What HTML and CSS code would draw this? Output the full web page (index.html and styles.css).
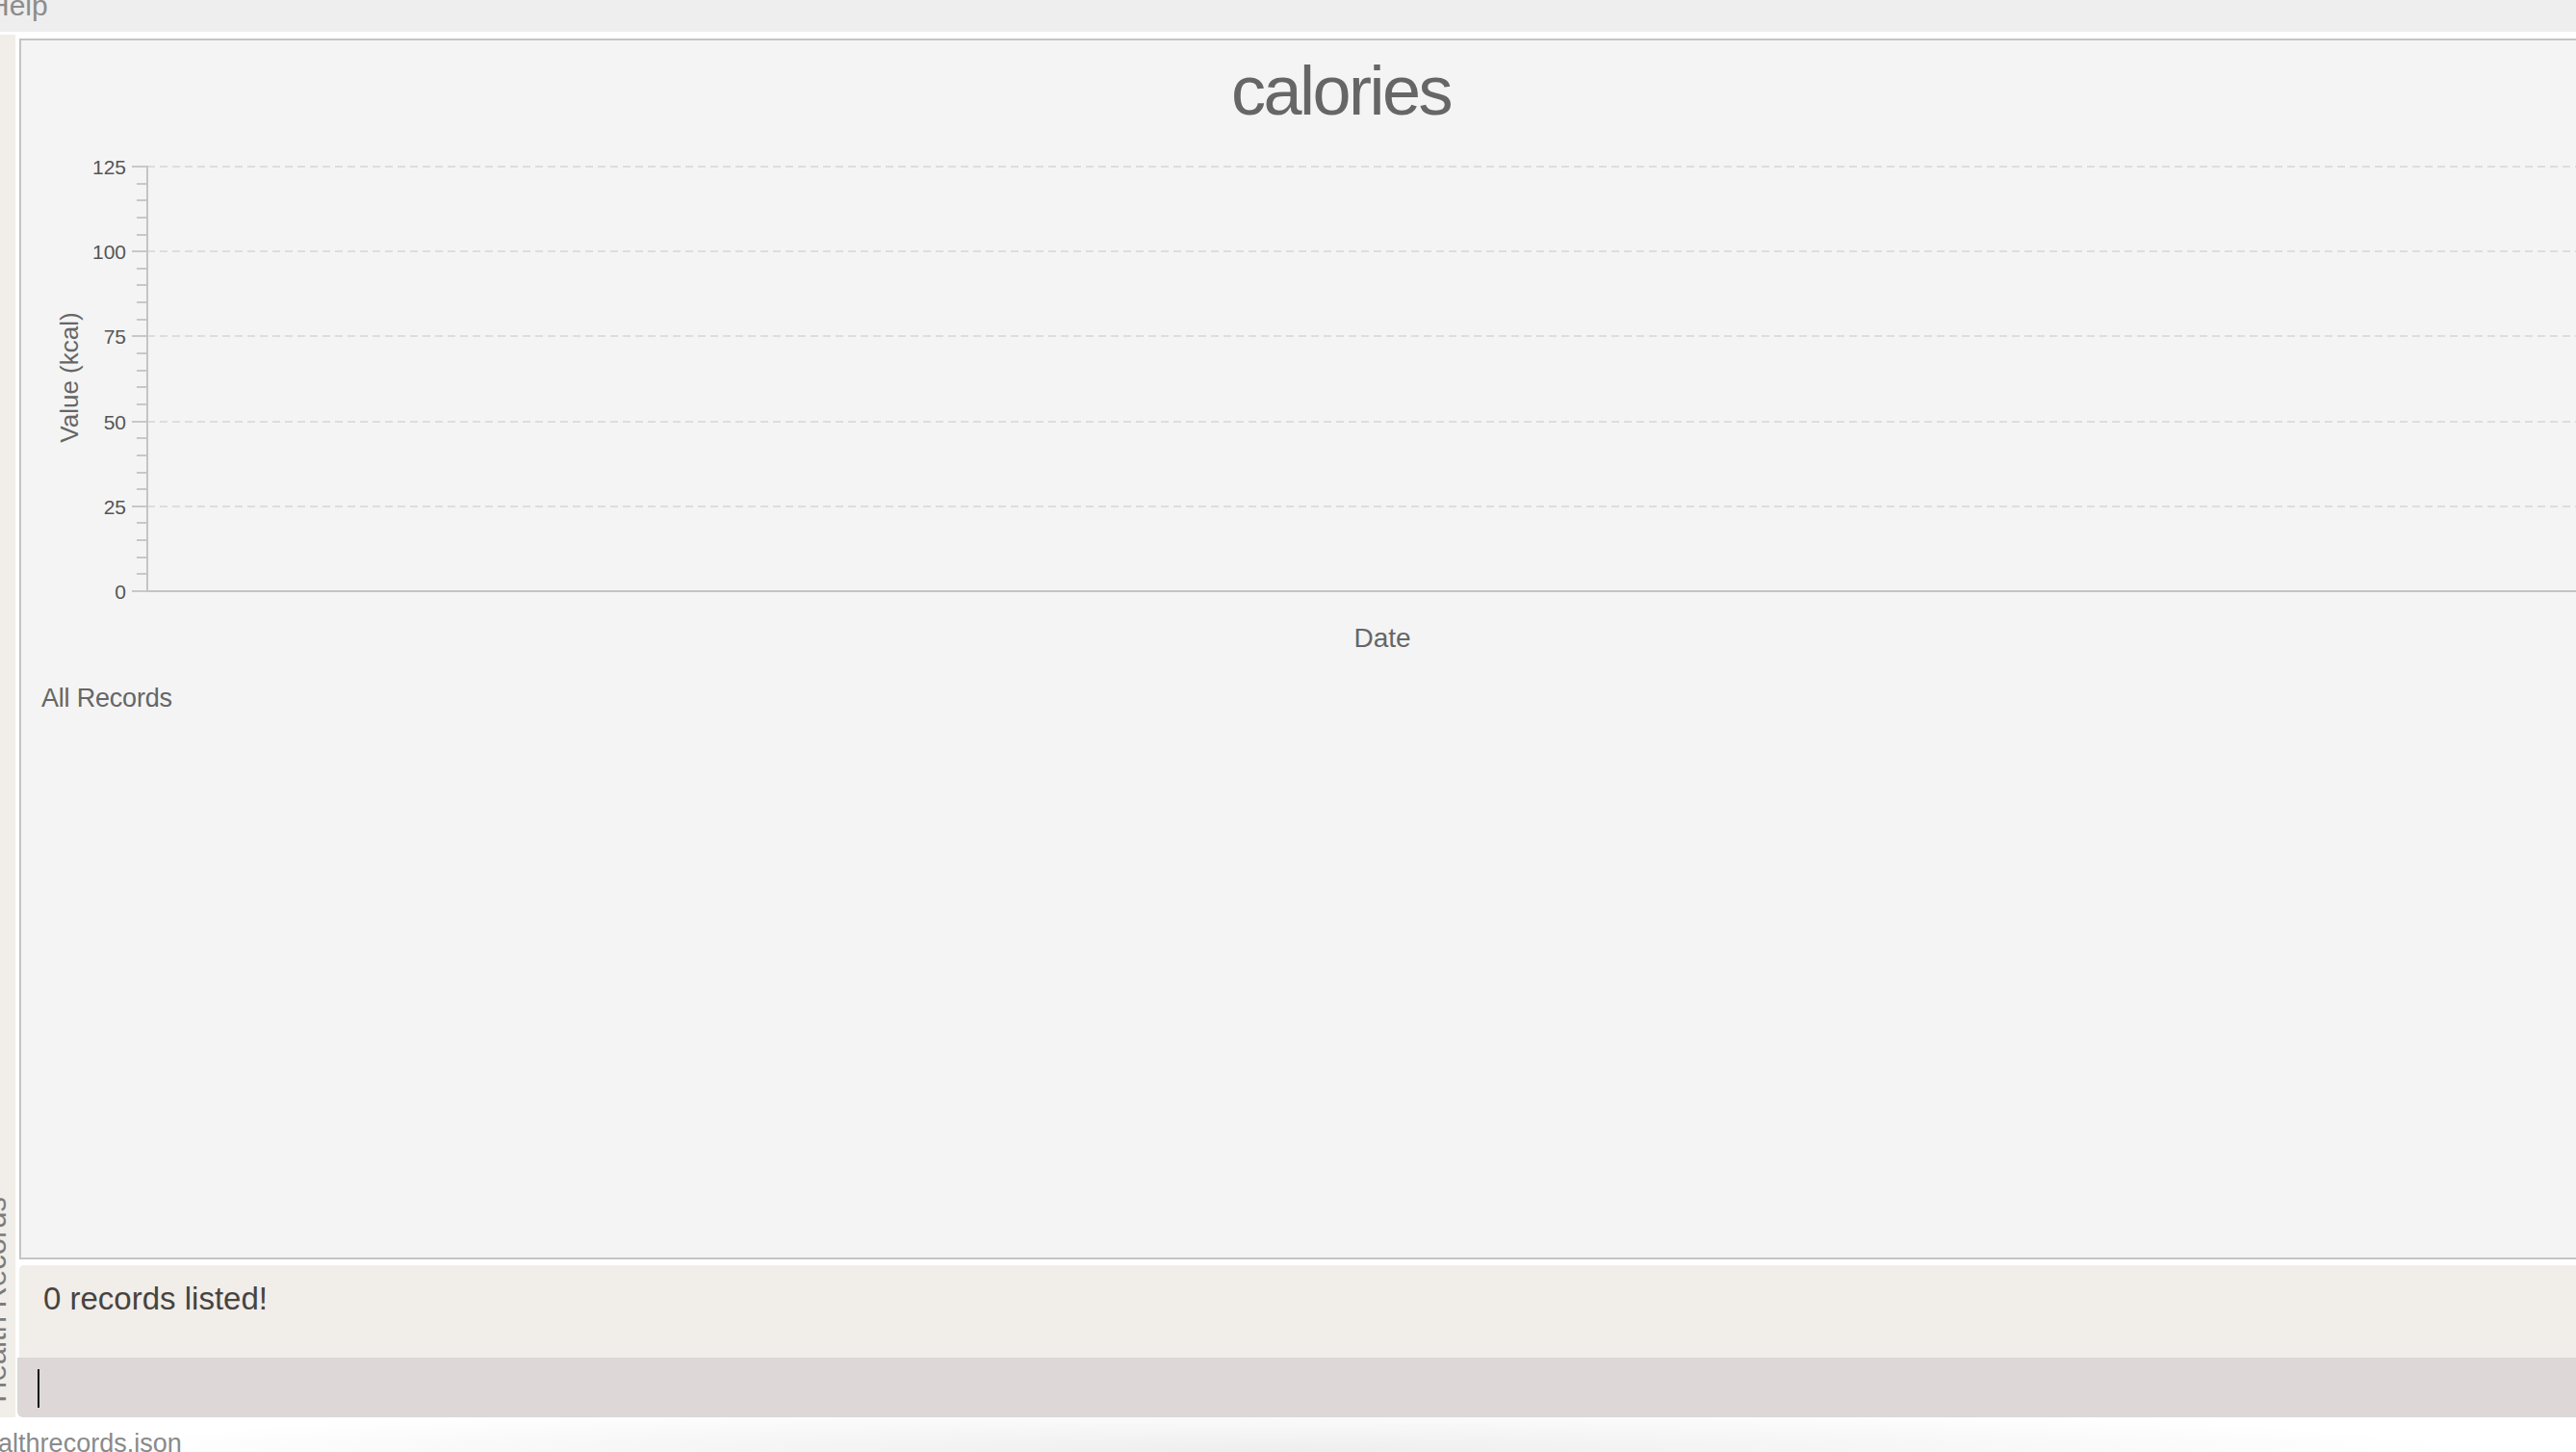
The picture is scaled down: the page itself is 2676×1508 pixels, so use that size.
FILE: index.html
```html
<!DOCTYPE html>
<html lang="en">
<head>
<meta charset="utf-8">
<title>Health Records</title>
<link rel="stylesheet" href="styles.css">
</head>
<body>
<div class="window">
  <div class="menubar"><span class="menu-item">Help</span></div>
  <div class="main">
    <div class="sidebar"><span class="sidebar-title">Health Records</span></div>
    <div class="content">
      <div class="chart-panel">
        <div class="chart-title">calories</div>
        <svg class="chart" width="2742" height="540" viewBox="0 0 2742 540">
          <g class="grid">
            <line x1="131" y1="23" x2="2697" y2="23"/>
            <line x1="131" y1="111" x2="2697" y2="111"/>
            <line x1="131" y1="199" x2="2697" y2="199"/>
            <line x1="131" y1="288" x2="2697" y2="288"/>
            <line x1="131" y1="376" x2="2697" y2="376"/>
          </g>
          <path class="ticks" d="M115 23H131M120 41H131M120 58H131M120 76H131M120 94H131M115 111H131M120 129H131M120 146H131M120 164H131M120 182H131M115 199H131M120 217H131M120 235H131M120 252H131M120 270H131M115 288H131M120 305H131M120 323H131M120 341H131M120 358H131M115 376H131M120 393H131M120 411H131M120 429H131M120 446H131M115 464H131"/>
          <path class="axis" d="M131 22V465M130 464H2697"/>
          <g class="tick-labels">
            <text x="109" y="23">125</text>
            <text x="109" y="111">100</text>
            <text x="109" y="199">75</text>
            <text x="109" y="288">50</text>
            <text x="109" y="376">25</text>
            <text x="109" y="464">0</text>
          </g>
          <text class="axis-label" transform="translate(50,242) rotate(-90)">Value (kcal)</text>
          <text class="axis-label date-label" x="1414" y="522">Date</text>
        </svg>
        <div class="list-title">All Records</div>
      </div>
      <div class="status">0 records listed!</div>
      <div class="command"><span class="caret"></span></div>
    </div>
  </div>
  <div class="footer"><span class="footer-path">./data/healthrecords.json</span></div>
</div>
</body>
</html>
```

FILE: styles.css
```css
html, body {
  margin: 0;
  padding: 0;
}

body {
  width: 2676px;
  height: 1508px;
  overflow: hidden;
  background: #ffffff;
  font-family: "Liberation Sans", Arial, sans-serif;
}

.window {
  display: flex;
  flex-direction: column;
  width: 2676px;
  height: 1508px;
}

.menubar {
  height: 33px;
  background: #eeeeee;
  overflow: hidden;
  flex: none;
}

.menu-item {
  display: block;
  margin-left: -12px;
  margin-top: -9px;
  font-size: 30px;
  line-height: 30px;
  color: #8c8c8c;
}

.main {
  display: flex;
  flex-direction: row;
  margin-top: 3px;
  height: 1436px;
  flex: none;
}

.sidebar {
  flex: none;
  width: 37px;
  margin-left: -21px;
  background: #f1ede8;
  display: flex;
  flex-direction: column;
  justify-content: flex-end;
  align-items: flex-start;
  padding-bottom: 15px;
  box-sizing: border-box;
  padding-left: 1px;
  overflow: hidden;
}

.sidebar-title {
  writing-mode: vertical-rl;
  transform: rotate(180deg);
  font-size: 31px;
  line-height: 31px;
  color: #7c7c7c;
  white-space: nowrap;
}

.content {
  flex: none;
  width: 2750px;
  display: flex;
  flex-direction: column;
}

.chart-panel {
  margin-top: 4px;
  margin-left: 4px;
  width: 2746px;
  height: 1268px;
  box-sizing: border-box;
  border: 2px solid #c4c4c4;
  background: #f4f4f4;
  padding-top: 16px;
  flex: none;
}

.chart-title {
  font-size: 72px;
  line-height: 72px;
  letter-spacing: -2.5px;
  text-align: center;
  color: #666666;
}

.chart {
  display: block;
  margin-top: 20px;
}

.grid line {
  stroke: #dddddd;
  stroke-width: 2;
  stroke-dasharray: 8 5;
}

.ticks {
  stroke: #c8c8c8;
  stroke-width: 2;
  fill: none;
}

.axis {
  stroke: #c4c4c4;
  stroke-width: 2;
  fill: none;
}

.tick-labels text {
  font-family: "Liberation Sans", Arial, sans-serif;
  font-size: 21px;
  fill: #555555;
  text-anchor: end;
  dominant-baseline: central;
}

.axis-label {
  font-family: "Liberation Sans", Arial, sans-serif;
  font-size: 26px;
  fill: #666666;
  text-anchor: middle;
  dominant-baseline: central;
}

.date-label {
  font-size: 28px;
  dominant-baseline: auto;
}

.list-title {
  margin-top: 21px;
  padding-left: 21px;
  font-size: 27px;
  line-height: 28px;
  letter-spacing: -0.2px;
  color: #666666;
}

.status {
  margin-top: 6px;
  margin-left: 4px;
  height: 96px;
  box-sizing: border-box;
  background: #f1ede9;
  border-radius: 5px 0 0 0;
  padding-top: 18px;
  padding-left: 25px;
  font-size: 33px;
  line-height: 33px;
  color: #474340;
  flex: none;
}

.command {
  margin-left: 2px;
  height: 62px;
  box-sizing: border-box;
  background: #ddd7d7;
  border-radius: 0 0 0 6px;
  padding-top: 12px;
  padding-left: 21px;
  flex: none;
}

.caret {
  display: block;
  width: 2px;
  height: 40px;
  background: #111111;
}

.footer {
  flex: none;
  height: 36px;
  overflow: hidden;
  background: radial-gradient(ellipse 1250px 48px at 1320px 100%, #eeeeee 0%, #f7f7f7 55%, #ffffff 100%);
}

.footer-path {
  display: block;
  margin-left: -107px;
  padding-top: 14px;
  font-size: 27px;
  line-height: 27px;
  color: #8a8a8a;
  white-space: nowrap;
}
```
